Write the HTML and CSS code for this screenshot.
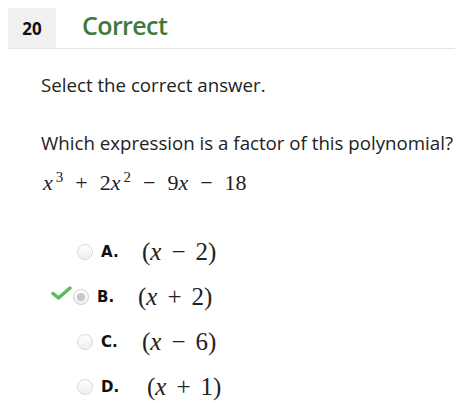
FILE: index.html
```html
<!DOCTYPE html>
<html>
<head>
<meta charset="utf-8">
<link rel="stylesheet" href="styles.css">
</head>
<body>
<div class="header">
  <div class="qnum">20</div>
  <div class="status">Correct</div>
</div>
<div class="content">
  <p class="instr">Select the correct answer.</p>
  <p class="question">Which expression is a factor of this polynomial?</p>
  <div class="math poly"><i>x</i><sup>3</sup><span class="op">+</span>2<i>x</i><sup>2</sup><span class="op">−</span>9<i>x</i><span class="op">−</span>18</div>
  <div class="options">
    <div class="opt">
      <span class="mark"></span>
      <span class="radio"></span>
      <span class="letter">A.</span>
      <span class="math ans">(<i>x</i><span class="op">−</span>2)</span>
    </div>
    <div class="opt shifted">
      <span class="mark"><svg width="21" height="14" viewBox="0 0 21 14"><path d="M2 7.5 L7.5 12 L19 2" fill="none" stroke="#5cb85c" stroke-width="3.4" stroke-linecap="round" stroke-linejoin="round"/></svg></span>
      <span class="radio checked"></span>
      <span class="letter">B.</span>
      <span class="math ans">(<i>x</i><span class="op">+</span>2)</span>
    </div>
    <div class="opt">
      <span class="mark"></span>
      <span class="radio"></span>
      <span class="letter">C.</span>
      <span class="math ans">(<i>x</i><span class="op">−</span>6)</span>
    </div>
    <div class="opt">
      <span class="mark"></span>
      <span class="radio"></span>
      <span class="letter">D.</span>
      <span class="math ans wide">(<i>x</i><span class="op">+</span>1)</span>
    </div>
  </div>
</div>
</body>
</html>
```
FILE: styles.css
```css
body {
  margin: 8px;
  background: #fff;
  font-family: "Open Sans", sans-serif;
  color: #222;
}
.header {
  display: flex;
  align-items: center;
  height: 40px;
  border-bottom: 1px solid #e6e6e6;
}
.qnum {
  width: 48px;
  height: 40px;
  background: #f0f0f0;
  display: flex;
  align-items: center;
  justify-content: center;
  font-weight: 700;
  font-size: 17px;
  color: #111;
}
.status {
  margin-left: 26px;
  font-size: 25px;
  font-weight: 600;
  letter-spacing: -0.6px;
  color: #3f7a3c;
  line-height: 1;
  margin-top: -5px;
}
.content {
  padding-left: 33px;
}
p {
  margin: 0;
  font-size: 18.7px;
  line-height: 26px;
  white-space: nowrap;
}
.instr {
  margin-top: 23px;
}
.question {
  margin-top: 32px;
}
.math {
  font-family: "Liberation Serif", "DejaVu Serif", serif;
  white-space: nowrap;
}
.math i {
  font-style: italic;
}
.math sup {
  font-size: 15px;
  vertical-align: 8px;
  line-height: 0;
  margin-left: 3px;
}
.op {
  margin: 0 12px;
}
.poly {
  font-size: 22px;
  margin-top: 12px;
  margin-left: 2px;
  line-height: 30px;
}
.options {
  margin-top: 37px;
  display: flex;
  flex-direction: column;
  gap: 12px;
}
.opt {
  display: flex;
  align-items: center;
  height: 33px;
}
.mark {
  width: 35px;
  display: flex;
  justify-content: flex-end;
  padding-right: 1px;
}
.shifted {
  margin-left: -4px;
}
.shifted .mark {
  margin-top: -8px;
}
.radio {
  width: 14px;
  height: 14px;
  border-radius: 50%;
  border: 1px solid #dadada;
  background: linear-gradient(#fefefe, #efefef);
  display: flex;
  align-items: center;
  justify-content: center;
}
.radio.checked {
  border-color: #d0d0d0;
}
.radio.checked::after {
  content: "";
  width: 8px;
  height: 8px;
  border-radius: 50%;
  background: #c6c6c6;
}
.letter {
  font-family: "DejaVu Sans", Verdana, sans-serif;
  font-weight: 700;
  font-size: 15px;
  color: #111;
  margin-left: 8px;
  width: 41px;
}
.ans {
  font-size: 25px;
}
.ans .op {
  margin: 0 10px;
}
.ans.wide {
  margin-left: 5px;
}
```
